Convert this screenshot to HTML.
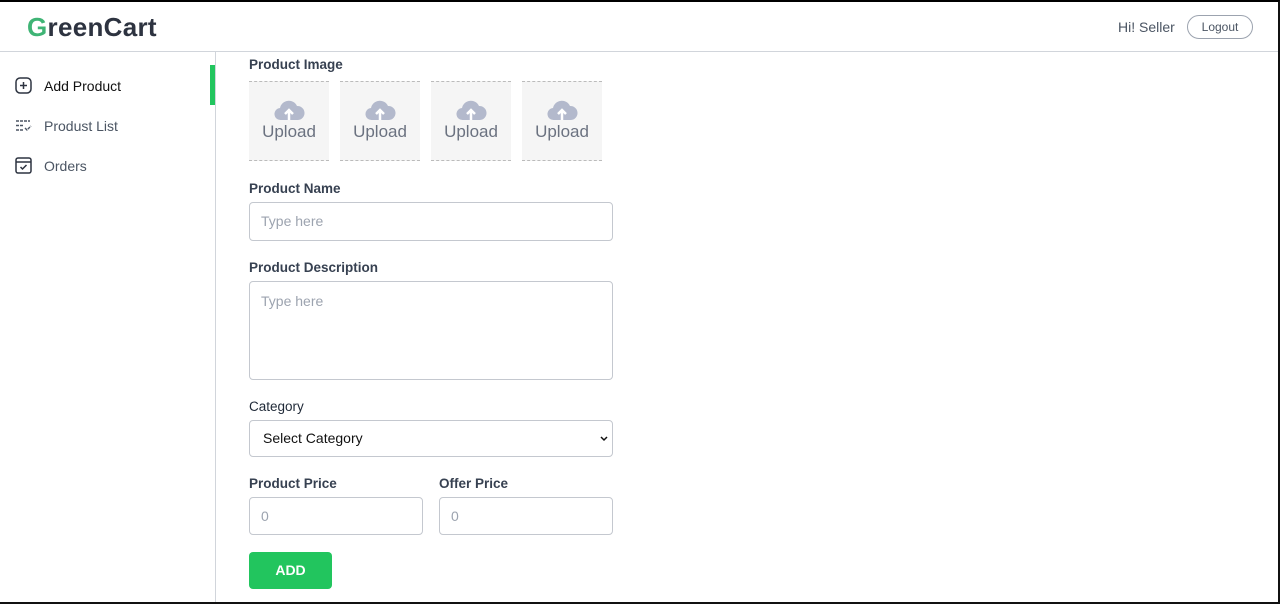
<!DOCTYPE html>
<html><head><style>
*{box-sizing:border-box;margin:0;padding:0}
body{width:1280px;height:604px;overflow:hidden;background:#fff;font-family:"Liberation Sans",sans-serif;position:relative;color:#1f2937}
.frame{position:absolute;inset:0;border-top:2px solid #000;border-right:2px solid #111;border-bottom:2px solid #111;pointer-events:none;z-index:9}
.hdr{position:absolute;left:0;top:0;width:1280px;height:52px;border-bottom:1px solid #d1d5db}
.logo{position:absolute;left:27px;top:12px;font-size:26px;font-weight:bold;color:#2d3340;letter-spacing:0.3px}
.logo span{color:#3fb475}
.hi{position:absolute;left:1118px;top:19px;font-size:14px;color:#4b5563}
.lo{position:absolute;left:1187px;top:15px;width:66px;height:24px;border:1px solid #9ca3af;border-radius:14px;font-size:12px;color:#4b5563;text-align:center;line-height:22px}
.side{position:absolute;left:0;top:52px;width:216px;height:552px;border-right:1px solid #d1d5db}
.it{position:absolute;left:15px;font-size:14px;color:#4b5563;display:flex;align-items:center}
.it svg{margin-right:12px}
.bar{position:absolute;left:210px;top:65px;width:5px;height:40px;background:#22c55e}
.lbl{position:absolute;left:249px;font-size:13.5px;font-weight:bold;color:#374151}
.up{position:absolute;top:81px;width:80px;height:80px;background:#f5f5f5;border-top:1px dashed #bbb;border-bottom:1px dashed #bbb;text-align:center}
.up div{position:absolute;top:40px;width:100%;font-size:17px;color:#6b7280}
.up svg{position:absolute;left:24px;top:17px}
.in{position:absolute;border:1px solid #c4c8cf;border-radius:4px;font-size:14px;color:#9ca3af;padding-left:11px}
.btn{position:absolute;left:249px;top:552px;width:83px;height:37px;background:#22c55e;border-radius:4px;color:#fff;font-size:14px;font-weight:bold;text-align:center;line-height:37px}
</style></head><body>
<div class="frame"></div>
<div class="hdr">
<div class="logo"><span>G</span>reenCart</div>
<div class="hi">Hi! Seller</div>
<div class="lo">Logout</div>
</div>
<div class="side">
<div class="it" style="top:25px;color:#111"><svg width="17" height="17" viewBox="0 0 17 17"><rect x="1" y="1" width="15" height="15" rx="4" fill="none" stroke="#2d3340" stroke-width="1.5"/><path d="M8.5 5v7M5 8.5h7" stroke="#2d3340" stroke-width="1.5"/></svg>Add Product</div>
<div class="it" style="top:65px"><svg width="17" height="17" viewBox="0 0 17 17"><path d="M1 4h14M1 8.5h7M1 13h7M10 11l2 2 4-4" stroke="#4b5563" stroke-width="1.4" fill="none" stroke-dasharray="3 1"/></svg>Produst List</div>
<div class="it" style="top:105px"><svg width="17" height="17" viewBox="0 0 17 17"><rect x="1" y="1" width="15" height="15" rx="2" fill="none" stroke="#2d3340" stroke-width="1.5"/><path d="M1 5h15M5.5 10l2 2 4-4" stroke="#2d3340" stroke-width="1.5" fill="none"/></svg>Orders</div>
</div>
<div class="bar"></div>
<div class="lbl" style="top:57px">Product Image</div>
<div class="up" style="left:249px"><svg width="32" height="22" viewBox="0 0 32 22"><path d="M8 21a6 6 0 0 1-1-12 9 9 0 0 1 17-2 7 7 0 0 1 1 14z" fill="#b3b9cc"/><path d="M16 21v-9M12 15l4-4 4 4" stroke="#fff" stroke-width="2.5" fill="none"/></svg><div>Upload</div></div>
<div class="up" style="left:340px"><svg width="32" height="22" viewBox="0 0 32 22"><path d="M8 21a6 6 0 0 1-1-12 9 9 0 0 1 17-2 7 7 0 0 1 1 14z" fill="#b3b9cc"/><path d="M16 21v-9M12 15l4-4 4 4" stroke="#fff" stroke-width="2.5" fill="none"/></svg><div>Upload</div></div>
<div class="up" style="left:431px"><svg width="32" height="22" viewBox="0 0 32 22"><path d="M8 21a6 6 0 0 1-1-12 9 9 0 0 1 17-2 7 7 0 0 1 1 14z" fill="#b3b9cc"/><path d="M16 21v-9M12 15l4-4 4 4" stroke="#fff" stroke-width="2.5" fill="none"/></svg><div>Upload</div></div>
<div class="up" style="left:522px"><svg width="32" height="22" viewBox="0 0 32 22"><path d="M8 21a6 6 0 0 1-1-12 9 9 0 0 1 17-2 7 7 0 0 1 1 14z" fill="#b3b9cc"/><path d="M16 21v-9M12 15l4-4 4 4" stroke="#fff" stroke-width="2.5" fill="none"/></svg><div>Upload</div></div>
<div class="lbl" style="top:181px">Product Name</div>
<div class="in" style="left:249px;top:202px;width:364px;height:39px;line-height:37px">Type here</div>
<div class="lbl" style="top:260px">Product Description</div>
<div class="in" style="left:249px;top:281px;width:364px;height:99px;padding-top:11px">Type here</div>
<div class="lbl" style="top:399px;font-weight:normal;color:#1f2937">Category</div>
<div class="in" style="left:249px;top:420px;width:364px;height:37px;line-height:35px;color:#111;padding-left:13px">Select Category<svg style="position:absolute;right:4px;top:15px" width="8" height="6" viewBox="0 0 8 6"><path d="M1 1l3 3 3-3" stroke="#111" stroke-width="1.5" fill="none"/></svg></div>
<div class="lbl" style="top:476px">Product Price</div>
<div class="lbl" style="top:476px;left:439px">Offer Price</div>
<div class="in" style="left:249px;top:497px;width:174px;height:38px;line-height:36px">0</div>
<div class="in" style="left:439px;top:497px;width:174px;height:38px;line-height:36px">0</div>
<div class="btn">ADD</div>
</body></html>
